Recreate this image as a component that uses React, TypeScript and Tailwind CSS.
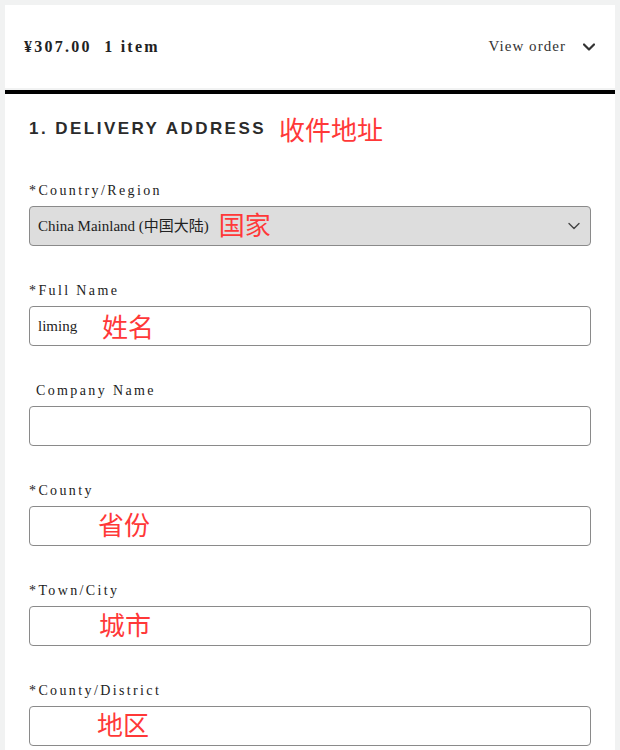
import React from 'react'

const serif = { fontFamily: '"Liberation Serif", "Noto Sans CJK SC", serif' }

const Chevron = ({ className, width = 2 }: { className?: string; width?: number }) => (
  <svg viewBox="0 0 12 8" className={className} fill="none">
    <polyline points="1,1.5 6,6.5 11,1.5" stroke="currentColor" strokeWidth={width} strokeLinecap="round" strokeLinejoin="round" />
  </svg>
)

const Note = ({ children }: { children: React.ReactNode }) => (
  <span className="text-[26px] leading-none text-[#ff3838] font-['Noto_Sans_CJK_SC',sans-serif]">{children}</span>
)

const Field = ({
  label,
  indent,
  children,
}: {
  label: string
  indent?: boolean
  children?: React.ReactNode
}) => (
  <div className="flex flex-col">
    <label
      className={`h-[20px] leading-[22px] text-[14px] tracking-[0.17em] text-[#222] ${indent ? 'pl-[7px]' : ''}`}
      style={serif}
    >
      {label}
    </label>
    <div className="mt-[6px] h-[40px] rounded-[4px] border border-[#8a8a8a] bg-white flex items-center">
      {children}
    </div>
  </div>
)

export default function App() {
  return (
    <div className="min-h-screen bg-[#f1f2f2] px-[5px] pt-[5px]">
      <div className="h-[83px] bg-white flex items-center justify-between pl-[19px] pr-[20px]">
        <span className="text-[16px] font-bold tracking-[0.14em] text-[#222]" style={serif}>
          ¥307.00&nbsp; 1 item
        </span>
        <div className="flex items-center gap-[17px]">
          <span className="text-[15px] tracking-[0.07em] text-[#333]" style={serif}>
            View order
          </span>
          <Chevron className="w-[12px] h-[8px] text-[#333]" width={2.2} />
        </div>
      </div>
      <div className="mt-[2px] h-[4px] bg-black" />
      <div className="bg-white px-[24px] pt-[20px] pb-[10px]">
        <div className="flex items-center h-[28px] gap-[13px] pt-[2px]">
          <h2 className="text-[17px] font-bold tracking-[0.145em] text-[#2b2b2b] font-['Liberation_Sans',sans-serif]">
            1. DELIVERY ADDRESS
          </h2>
          <Note>收件地址</Note>
        </div>
        <div className="mt-[38px] flex flex-col gap-[34px]">
          <div className="flex flex-col">
            <label className="h-[20px] leading-[22px] text-[14px] tracking-[0.17em] text-[#222]" style={serif}>
              *Country/Region
            </label>
            <div className="mt-[6px] h-[40px] rounded-[4px] border border-[#8a8a8a] bg-[#dddddd] flex items-center pl-[8px] pr-[10px]">
              <span className="text-[15px] text-[#222]" style={serif}>
                China Mainland (中国大陆)
              </span>
              <span className="ml-[10px]">
                <Note>国家</Note>
              </span>
              <Chevron className="ml-auto w-[12px] h-[8px] text-[#444]" width={1.4} />
            </div>
          </div>
          <Field label="*Full Name">
            <span className="pl-[8px] text-[15px] text-[#222] w-[72px]" style={serif}>
              liming
            </span>
            <Note>姓名</Note>
          </Field>
          <Field label="Company Name" indent />
          <Field label="*County">
            <span className="pl-[68px]">
              <Note>省份</Note>
            </span>
          </Field>
          <Field label="*Town/City">
            <span className="pl-[69px]">
              <Note>城市</Note>
            </span>
          </Field>
          <Field label="*County/District">
            <span className="pl-[67px]">
              <Note>地区</Note>
            </span>
          </Field>
        </div>
      </div>
    </div>
  )
}
